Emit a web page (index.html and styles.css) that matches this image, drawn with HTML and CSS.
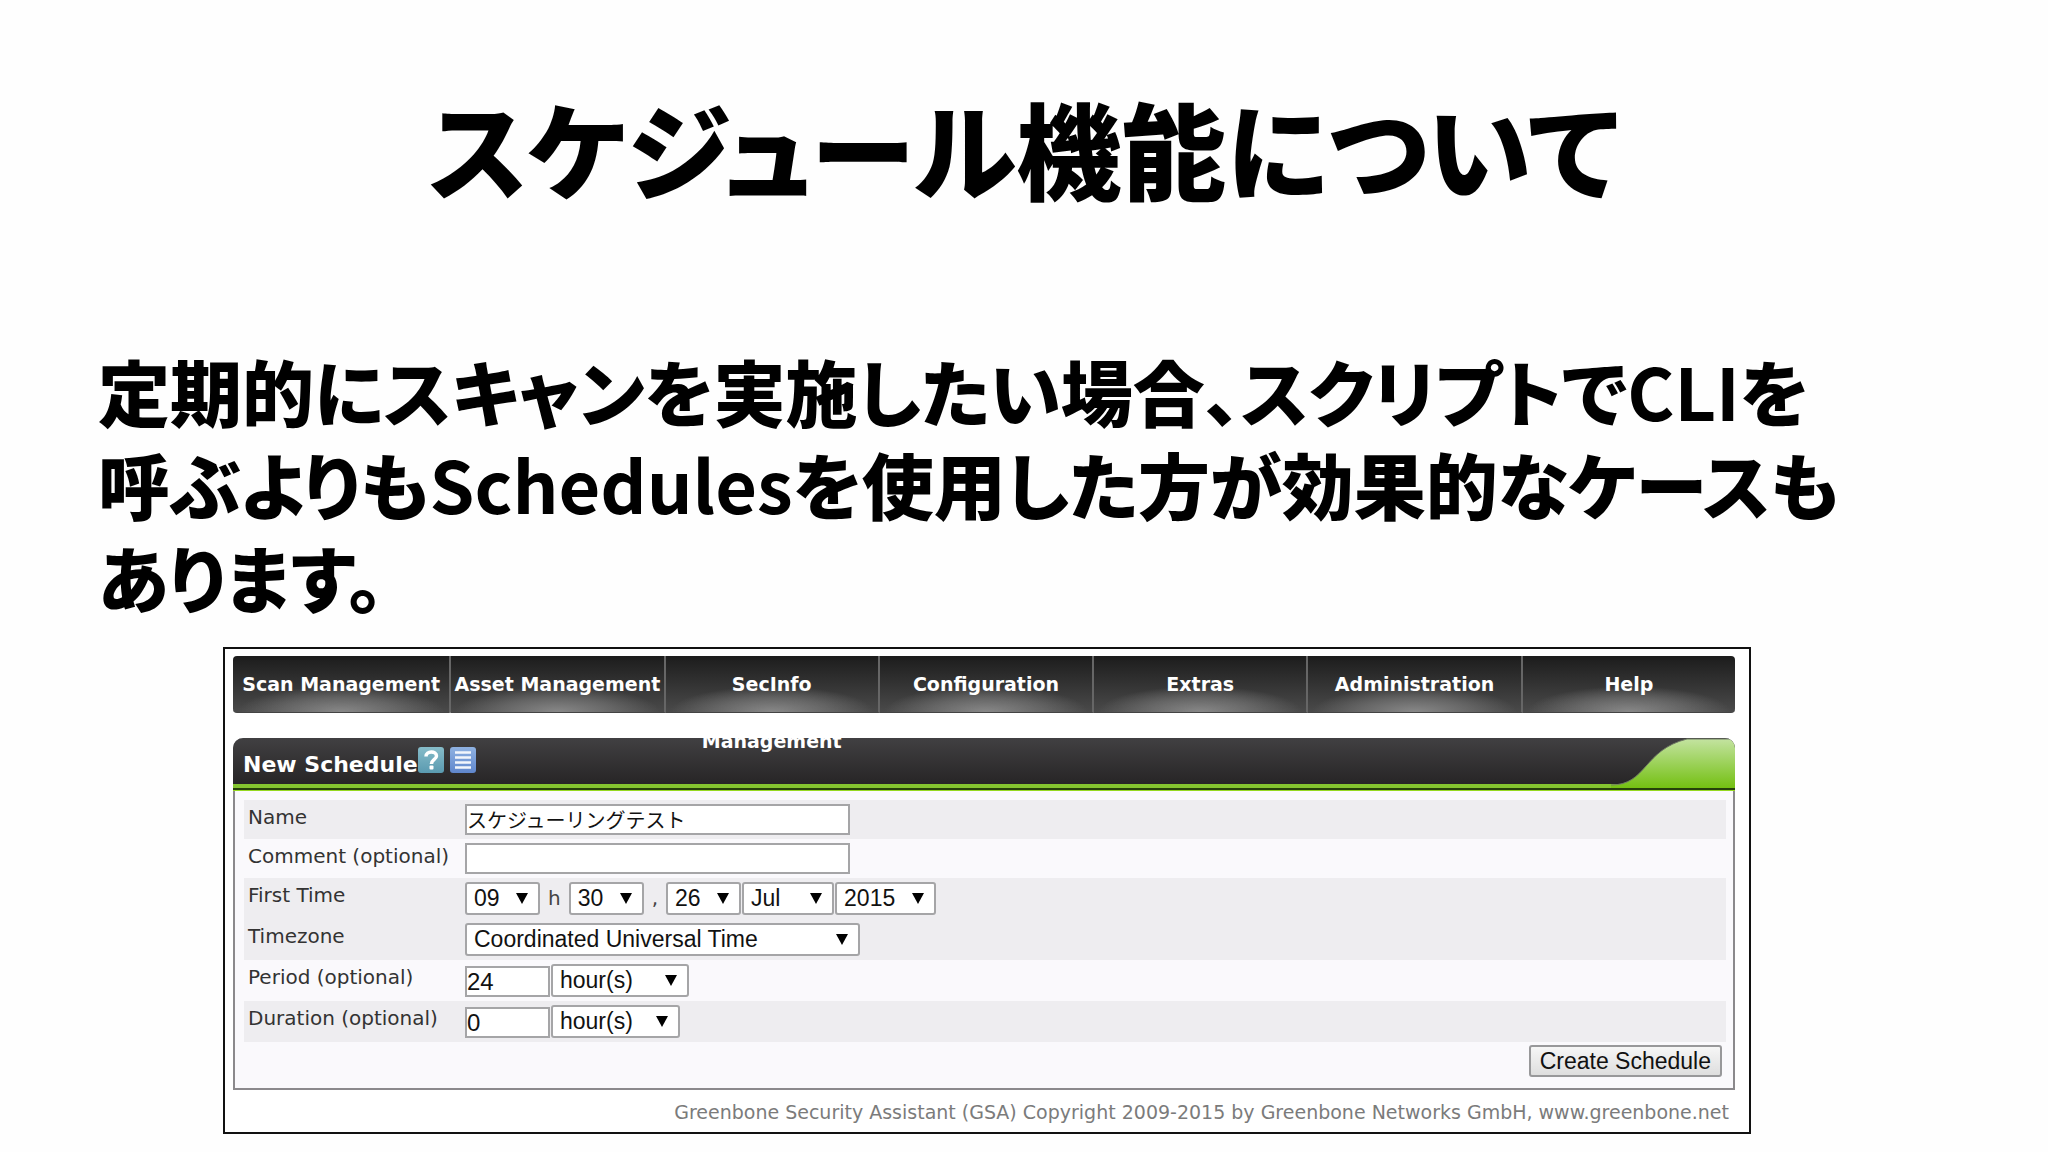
FILE: index.html
```html
<!DOCTYPE html>
<html lang="ja">
<head>
	<meta charset="UTF-8">
	<title>スケジュール機能について</title>
	<link rel="stylesheet" href="styles.css">
</head>
<body>

<h1 class="slide-title">スケジュール機能について</h1>

<p class="slide-text">
	定期的にスキャンを実施したい場合、スクリプトで<span class="latin">CLI</span>を<br>
	呼ぶよりも<span class="latin">Schedules</span>を使用した方が効果的なケースも<br>
	あります。
</p>

<div class="gsa">
	<ul class="gsa-nav">
		<li><a href="#">Scan Management</a></li>
		<li><a href="#">Asset Management</a></li>
		<li><a href="#">SecInfo Management</a></li>
		<li><a href="#">Configuration</a></li>
		<li><a href="#">Extras</a></li>
		<li><a href="#">Administration</a></li>
		<li><a href="#">Help</a></li>
	</ul>

	<form class="box">
		<div class="box-header">
			<h2>New Schedule</h2>
			<a href="#" class="icon" aria-label="Help">
				<svg viewBox="0 0 26 26">
					<defs>
						<linearGradient id="help-bg" x1="0" y1="0" x2="0" y2="1">
							<stop offset="0" stop-color="#86bcc9"/>
							<stop offset="1" stop-color="#5a9ab0"/>
						</linearGradient>
					</defs>
					<rect width="26" height="26" rx="3" fill="url(#help-bg)"/>
					<path d="M8 9.500C8 3.500 18.500 3.500 18.500 9C18.500 12.500 13.500 12.500 13.500 17" fill="none" stroke="#fff" stroke-width="3.500"/>
					<rect x="11.500" y="18.500" width="4" height="4" rx="1" fill="#fff"/>
				</svg>
			</a>
			<a href="#" class="icon" aria-label="Schedules">
				<svg viewBox="0 0 26 26">
					<defs>
						<linearGradient id="list-bg" x1="0" y1="0" x2="0" y2="1">
							<stop offset="0" stop-color="#8fb2e2"/>
							<stop offset="1" stop-color="#5f86cc"/>
						</linearGradient>
					</defs>
					<rect width="26" height="26" rx="3" fill="url(#list-bg)"/>
					<path d="M5 5.500H21M5 10.500H21M5 15.500H21M5 20.500H21" stroke="#f2f6fc" stroke-width="2.500"/>
				</svg>
			</a>
			<svg class="wave" viewBox="0 0 124 50" preserveAspectRatio="none">
				<defs>
					<linearGradient id="wave-bg" x1="0" y1="0" x2="0" y2="1">
						<stop offset="0" stop-color="#c3e3a0"/>
						<stop offset="1" stop-color="#74c012"/>
					</linearGradient>
				</defs>
				<path d="M0 47C36 47 32 12 76 1H124V50H0Z" fill="url(#wave-bg)"/>
				<path d="M0 47C36 47 32 12 76 1H124" fill="none" stroke="#6f7a64"/>
			</svg>
		</div>

		<table class="fields">
			<tr>
				<th><label for="name">Name</label></th>
				<td><input id="name" class="text-wide" type="text" value="スケジューリングテスト"></td>
			</tr>
			<tr class="plain">
				<th><label for="comment">Comment (optional)</label></th>
				<td><input id="comment" class="text-wide" type="text"></td>
			</tr>
			<tr class="tall">
				<th><label for="hour">First Time</label></th>
				<td>
					<div class="controls">
						<span class="select"><select id="hour" class="w-two"><option>09</option></select></span>
						<label class="sep" for="minute">h</label>
						<span class="select"><select id="minute" class="w-two"><option>30</option></select></span>
						<label class="sep" for="day">,</label>
						<span class="select"><select id="day" class="w-two"><option>26</option></select></span>
						<span class="select"><select class="w-month" aria-label="Month"><option>Jul</option></select></span>
						<span class="select"><select class="w-year" aria-label="Year"><option>2015</option></select></span>
					</div>
				</td>
			</tr>
			<tr class="tall">
				<th><label for="timezone">Timezone</label></th>
				<td>
					<div class="controls">
						<span class="select"><select id="timezone" class="w-zone"><option>Coordinated Universal Time</option></select></span>
					</div>
				</td>
			</tr>
			<tr class="tall plain">
				<th><label for="period">Period (optional)</label></th>
				<td>
					<div class="controls">
						<input id="period" class="text-short" type="text" value="24">
						<span class="select"><select class="w-period" aria-label="Period unit"><option>hour(s)</option></select></span>
					</div>
				</td>
			</tr>
			<tr class="tall">
				<th><label for="duration">Duration (optional)</label></th>
				<td>
					<div class="controls">
						<input id="duration" class="text-short" type="text" value="0">
						<span class="select"><select class="w-duration" aria-label="Duration unit"><option>hour(s)</option></select></span>
					</div>
				</td>
			</tr>
		</table>

		<div class="actions">
			<button type="button">Create Schedule</button>
		</div>
	</form>

	<p class="copyright">Greenbone Security Assistant (GSA) Copyright 2009-2015 by Greenbone Networks GmbH, www.greenbone.net</p>
</div>

</body>
</html>
```
FILE: styles.css
```css
* {
	box-sizing: border-box;
}

body {
	margin: 0;
	background: #fefefe;
	color: #000;
	font-family: "DejaVu Sans", Verdana, sans-serif;
}

.slide-title {
	margin: 0;
	padding-top: 68px;
	font: 900 105px/156px "Noto Sans CJK JP", sans-serif;
	font-feature-settings: "palt";
	text-align: center;
}

.slide-text {
	margin: 0;
	padding: 119px 0 0 98px;
	font: 900 72px/93px "Noto Sans CJK JP", sans-serif;
	font-feature-settings: "palt";
	white-space: nowrap;
}

.slide-text .latin {
	font-weight: 700;
}

.gsa {
	margin: 25px 297px 0 223px;
	padding: 7px 14px 0 8px;
	border: 2px solid #111;
	background: #fff;
}

/* navigation */

.gsa-nav {
	position: relative;
	z-index: 1;
	display: flex;
	height: 57px;
	margin: 0;
	padding: 0;
	list-style: none;
}

.gsa-nav li {
	flex: 1 1 0;
	background:
		radial-gradient(ellipse 48% 46% at 50% 100%, #888, rgba(115,115,115,0.7) 55%, transparent),
		linear-gradient(#1c1c1c, #4a4a4a);
	border-right: 2px solid #666;
	border-bottom: 1px solid #444;
}

.gsa-nav li:first-child {
	flex-basis: 6px;
	border-radius: 4px 0 0 4px;
}

.gsa-nav li:last-child {
	border-right: 0;
	border-radius: 0 4px 4px 0;
}

.gsa-nav a {
	display: block;
	color: #fff;
	font-size: 19px;
	font-weight: 700;
	line-height: 57px;
	text-align: center;
	text-decoration: none;
}

/* dialog box */

.box {
	margin-top: 25px;
	border: 2px solid #8b898c;
	border-top: 0;
	border-radius: 10px 10px 0 0;
	background: #faf9fc;
}

.box-header {
	position: relative;
	display: flex;
	height: 53px;
	margin: 0 -2px;
	padding: 9px 10px 0;
	border-radius: 10px 10px 0 0;
	background: linear-gradient(#414042, #272526 46px, #84c52f 46px, #84c52f 50px, #26400a 50px, #26400a 52px, #96d820 52px);
	overflow: hidden;
}

.box-header h2 {
	margin: 0;
	color: #fff;
	font-size: 22px;
	line-height: 35px;
}

.icon {
	width: 26px;
	height: 26px;
	margin-right: 6px;
}

.icon svg {
	display: block;
}

.wave {
	position: absolute;
	top: 0;
	right: 0;
	width: 124px;
	height: 50px;
}

.fields {
	width: calc(100% - 16px);
	margin: 9px 7px 0 9px;
	border-collapse: collapse;
}

.fields tr {
	height: 39px;
	background: #eeedf0;
}

.fields .tall {
	height: 41px;
}

.fields .plain {
	background: #faf9fc;
}

.fields th {
	width: 221px;
	padding: 3px 0 0 4px;
	color: #333;
	font-size: 20px;
	font-weight: 400;
	line-height: 28px;
	text-align: left;
	vertical-align: top;
}

.fields td {
	padding: 0;
}

.controls {
	display: flex;
	align-items: flex-end;
	gap: 1px;
}

input,
select {
	display: block;
	height: 31px;
	margin: 0;
	border: 2px solid #a5a5a7;
	background: #fff;
	color: #111;
}

input {
	padding: 0;
	font: 24px/27px "Liberation Sans", "Noto Sans CJK JP", sans-serif;
}

.text-wide {
	width: 385px;
	font-size: 20px;
}

.text-short {
	width: 85px;
}

select {
	height: 33px;
	padding: 0 7px;
	border-radius: 3px;
	font: 23px/29px "Liberation Sans", Arial, sans-serif;
	appearance: none;
}

.select {
	position: relative;
}

.select::after {
	content: "";
	position: absolute;
	top: 11px;
	right: 12px;
	border: 6px solid transparent;
	border-top: 11px solid #000;
	border-bottom: 0;
	pointer-events: none;
}

.sep {
	padding: 0 7px;
	color: #444;
	font-size: 20px;
	line-height: 33px;
}

.w-two {
	width: 75px;
}

.w-month {
	width: 92px;
}

.w-year {
	width: 101px;
}

.w-zone {
	width: 395px;
}

.w-period {
	width: 138px;
}

.w-duration {
	width: 129px;
}

.actions {
	padding: 3px 11px 11px 0;
	text-align: right;
}

button {
	height: 32px;
	padding: 0 9px;
	border: 2px solid #98989a;
	border-radius: 3px;
	background: linear-gradient(#f6f6f6, #dedede);
	color: #111;
	font: 23px/26px "Liberation Sans", Arial, sans-serif;
	vertical-align: top;
}

.copyright {
	margin: 0;
	padding: 9px 6px 7px 0;
	color: #7b7b7b;
	font-size: 19px;
	line-height: 26px;
	text-align: right;
}
```
